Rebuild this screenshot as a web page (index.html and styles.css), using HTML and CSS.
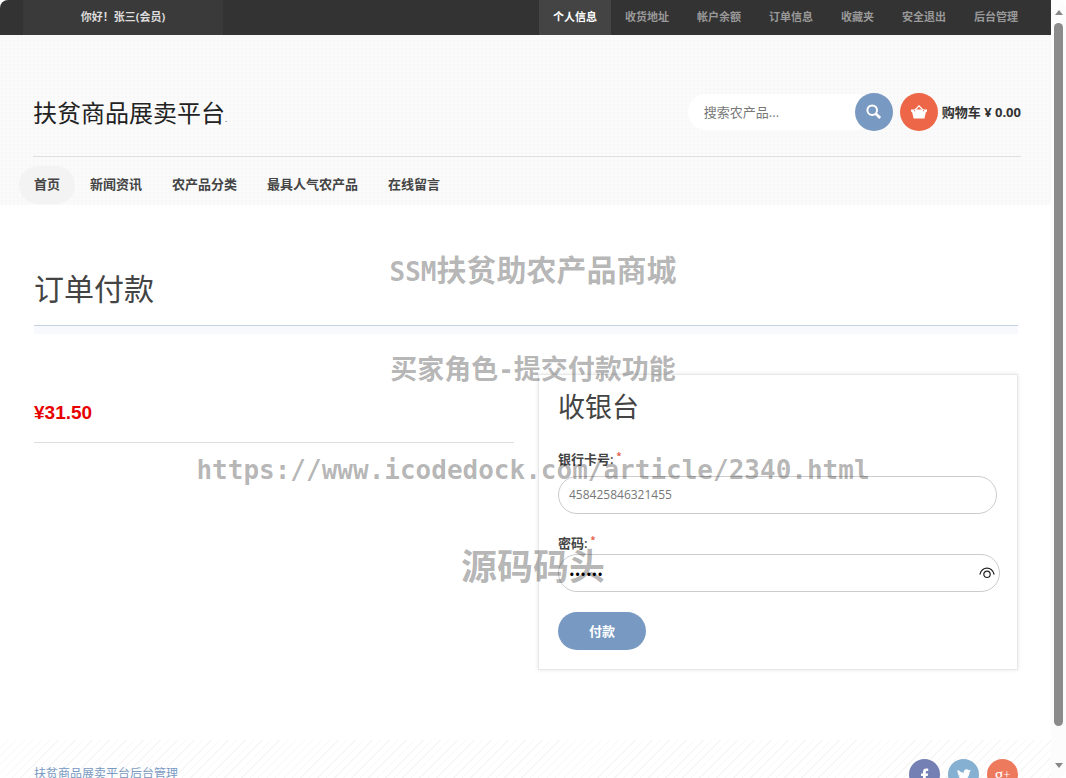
FILE: index.html
```html
<!DOCTYPE html>
<html lang="zh-CN">
<head>
<meta charset="utf-8">
<title>订单付款 - 扶贫商品展卖平台</title>
<link rel="stylesheet" href="styles.css">
</head>
<body>
<div class="window">
  <div class="page">
    <div class="topbar">
      <div class="greeting">你好！张三(会员)</div>
      <nav class="account-nav">
        <a class="active" href="#">个人信息</a>
        <a href="#">收货地址</a>
        <a href="#">帐户余额</a>
        <a href="#">订单信息</a>
        <a href="#">收藏夹</a>
        <a href="#">安全退出</a>
        <a href="#">后台管理</a>
      </nav>
    </div>

    <header class="header">
      <div class="brand-row">
        <a class="logo" href="#">扶贫商品展卖平台<small>.</small></a>
        <form class="search">
          <input type="text" aria-label="搜索农产品" placeholder="搜索农产品...">
          <button type="button" aria-label="搜索">
            <svg width="16" height="16" viewBox="0 0 16 16" fill="none" stroke="#fff"><circle cx="6.2" cy="6.2" r="4.8" stroke-width="2"/><path d="M9.8 9.8l4.4 4.2" stroke-width="2.8"/></svg>
          </button>
        </form>
        <a class="cart" href="#">
          <span class="cart-icon">
            <svg width="16" height="14" viewBox="0 0 16 14"><path d="M3.500 5.500L8 .9l4.500 4.600" fill="none" stroke="#fff" stroke-width="1.300"/><path d="M0 4.500h16v2.300h-1L13.400 13.500H2.600L1 6.800H0z" fill="#fff"/><circle cx="3.600" cy="5.700" r=".6" fill="#ec6647"/><circle cx="12.400" cy="5.700" r=".6" fill="#ec6647"/></svg>
          </span>
          购物车 ¥ 0.00
        </a>
      </div>
      <nav class="main-nav">
        <a class="active" href="#">首页</a>
        <a href="#">新闻资讯</a>
        <a href="#">农产品分类</a>
        <a href="#">最具人气农产品</a>
        <a href="#">在线留言</a>
      </nav>
    </header>

    <main class="content">
      <h1>订单付款</h1>
      <div class="columns">
        <section class="amount">¥31.50</section>
        <form class="checkout">
          <h2>收银台</h2>
          <label class="first" for="card">银行卡号:<sup>*</sup></label>
          <input class="field" id="card" type="text" value="458425846321455">
          <label for="password">密码:<sup>*</sup></label>
          <div class="field password">
            <input id="password" type="password" value="123456">
            <button type="button" aria-label="显示密码">
              <svg width="16" height="12" viewBox="0 0 16 12" fill="none" stroke="#222" stroke-width="1.200"><path d="M.8 7.500C2 3.500 4.800 1.200 8 1.200s6 2.300 7.200 6.300"/><circle cx="8" cy="7.300" r="3.200"/></svg>
            </button>
          </div>
          <button class="pay" type="button">付款</button>
        </form>
      </div>
    </main>

    <footer class="footer">
      <a class="admin-link" href="#">扶贫商品展卖平台后台管理</a>
      <div class="social">
        <a class="facebook" href="#" aria-label="Facebook"><svg width="12" height="14" viewBox="0 0 12 14"><path d="M4 14V8H2V5.500h2V3.800C4 1.600 5.200.4 7.200.4h2v2.500H7.900c-.8 0-1.100.4-1.100 1.100v1.500h2.300L8.800 8h-2v6z" fill="#fff"/></svg></a>
        <a class="twitter" href="#" aria-label="Twitter"><svg width="14" height="12" viewBox="0 0 24 20"><path d="M24 2.400a10 10 0 0 1-2.800.8A5 5 0 0 0 23.300.5a10 10 0 0 1-3.100 1.200 4.900 4.900 0 0 0-8.400 4.500A14 14 0 0 1 1.700 1a4.900 4.900 0 0 0 1.500 6.600 5 5 0 0 1-2.200-.6 4.900 4.900 0 0 0 3.900 4.900 5 5 0 0 1-2.200.1 4.900 4.900 0 0 0 4.600 3.400A10 10 0 0 1 0 17.500 14 14 0 0 0 21.500 5z" fill="#fff"/></svg></a>
        <a class="google" href="#" aria-label="Google+">g<sup>+</sup></a>
      </div>
    </footer>
  </div>

  <div class="scrollbar" aria-hidden="true">
    <i class="arrow up"></i>
    <i class="thumb"></i>
    <i class="arrow down"></i>
  </div>

  <div class="watermark">
    <p class="wm-title"><span>SSM</span>扶贫助农产品商城</p>
    <p class="wm-feature">买家角色<span>-</span>提交付款功能</p>
    <p class="wm-url"><span>https://www.icodedock.com/article/2340.html</span></p>
    <p class="wm-site">源码码头</p>
  </div>
</div>
</body>
</html>
```
FILE: styles.css
```css
* { box-sizing: border-box; }

body {
  margin: 0;
  background: #fff;
  color: #444;
  font: 13px/20px "Open Sans", "Noto Sans CJK SC", sans-serif;
}

a { color: inherit; text-decoration: none; }
h1, h2, p { margin: 0; font-weight: 400; }
input, button { font: inherit; color: inherit; border: 0; padding: 0; background: none; outline: 0; }
svg { display: block; }

.window {
  position: relative;
  display: flex;
  height: 100vh;
  overflow: hidden;
  border-radius: 8px;
}

.page { flex: 1; min-width: 0; }

/* Top bar */
.topbar {
  display: flex;
  justify-content: space-between;
  height: 35px;
  padding: 0 19px 0 23px;
  background: #333;
  color: #999;
  font-size: 11px;
  font-weight: 700;
  line-height: 34px;
}
.greeting { width: 200px; background: #3a3a3a; color: #ddd; text-align: center; }
.account-nav { display: flex; }
.account-nav a { padding: 0 14px; }
.account-nav .active { background: #444; color: #fff; }

/* Header */
.header {
  padding: 0 30px 0 33px;
  background: #fafafa radial-gradient(#f7f7f7 1px, transparent 1px) 0 0 / 4px 4px;
}
.brand-row {
  display: flex;
  align-items: center;
  height: 122px;
  padding-top: 33px;
  border-bottom: 1px solid #e0e0e0;
}
.logo { margin-right: auto; padding-top: 8px; color: #222; font-size: 24px; line-height: 36px; }
.logo small { font-size: 8px; }
.search { display: flex; align-items: center; }
.search input {
  width: 186px;
  height: 36px;
  margin-right: -19px;
  padding: 0 16px;
  border-radius: 18px;
  background: #fff;
}
.search input::placeholder { color: #777; opacity: 1; }
.search button, .cart-icon {
  display: flex;
  align-items: center;
  justify-content: center;
  width: 38px;
  height: 38px;
  border-radius: 50%;
}
.search button { background: #7899c2; }
.cart { display: flex; align-items: center; gap: 4px; margin-left: 7px; color: #333; font-weight: 700; }
.cart-icon { background: #ec6647; }
.main-nav { display: flex; margin-left: -14px; padding: 9px 0 1px; font-weight: 600; }
.main-nav a { padding: 0 15px; border-radius: 19px; line-height: 36px; padding-bottom: 2px; }
.main-nav .active { background: #f3f3f3; }

/* Order payment */
.content { padding: 60px 33px 70px 34px; }
.content h1 {
  padding-bottom: 12px;
  border-bottom: 1px solid #c3d2de;
  box-shadow: 0 8px #f7f9fc;
  font-size: 30px;
  line-height: 48px;
}
.columns { display: grid; grid-template-columns: 1fr 1fr; gap: 24px; align-items: start; margin-top: 48px; }
.amount {
  padding: 24px 0 14px;
  border-bottom: 1px solid #ddd;
  color: #e60000;
  font: 700 19px/30px "Liberation Sans", sans-serif;
}
.checkout {
  display: flex;
  flex-direction: column;
  padding: 12px 19px 19px;
  border: 1px solid #e8e8e8;
  box-shadow: 0 0 4px #e6e6e6;
}
.checkout h2 { margin-bottom: 22px; font-size: 27px; line-height: 40px; }
.checkout label { height: 20px; font-weight: 600; line-height: 18px; }
.checkout .first { height: 27px; line-height: 20px; }
.checkout sup { margin-left: 3px; color: #e2492f; font-size: 9px; line-height: 0; }
.field {
  height: 38px;
  margin-bottom: 20px;
  padding: 0 10px;
  border: 1px solid #ccc;
  border-radius: 19px;
  color: #777;
  font-size: 12px;
}
input.field { margin-right: 1px; padding-bottom: 2px; }
.password { display: flex; align-items: center; margin-right: -2px; padding-right: 4px; color: #000; }
.password input { flex: 1; min-width: 0; padding-top: 2px; font-size: 15px; }
.pay { align-self: start; width: 88px; height: 38px; border-radius: 19px; background: #7899c2; color: #fff; font-weight: 700; }

/* Footer */
.footer {
  display: flex;
  justify-content: space-between;
  padding: 19px 33px 40px 34px;
  background: repeating-linear-gradient(135deg, #fff 0 5px, #f6f6f6 5px 6px);
}
.admin-link { color: #7899c2; font-size: 12px; line-height: 30px; }
.social { display: flex; gap: 8px; }
.social a {
  display: flex;
  align-items: center;
  justify-content: center;
  width: 31px;
  height: 31px;
  border-radius: 50%;
  color: #fff;
  font: 18px/18px "Liberation Serif", serif;
}
.social sup { font-size: 12px; line-height: 0; }
.facebook { background: #7480b4; }
.twitter { background: #85b0d1; }
.google { background: #ee7a5e; }

/* Scrollbar */
.scrollbar {
  display: flex;
  flex-direction: column;
  align-items: center;
  gap: 8px;
  width: 15px;
  padding: 10px 0;
  background: #fcfcfc;
}
.arrow { border: 4px solid transparent; }
.up { border-top: 0; border-bottom: 5px solid #888; }
.down { border-bottom: 0; border-top: 5px solid #888; }
.thumb { flex: 1; width: 9px; margin-bottom: 29px; border-radius: 5px; background: #8b8b8b; }

/* Watermark overlay */
.watermark {
  position: absolute;
  inset: 0;
  display: flex;
  flex-direction: column;
  align-items: center;
  padding-top: 243px;
  color: rgba(0, 0, 0, .3);
  font-family: "Noto Sans CJK SC", sans-serif;
  line-height: 50px;
  white-space: nowrap;
  pointer-events: none;
}
.watermark p { height: 50px; margin-bottom: 50px; font-weight: 700; }
.watermark span { font-family: "DejaVu Sans Mono", monospace; font-size: 26px; }
.wm-title { font-size: 30px; }
.wm-feature, .wm-url { font-size: 27px; }
.watermark .wm-site { font-size: 36px; line-height: 42px; }
```
